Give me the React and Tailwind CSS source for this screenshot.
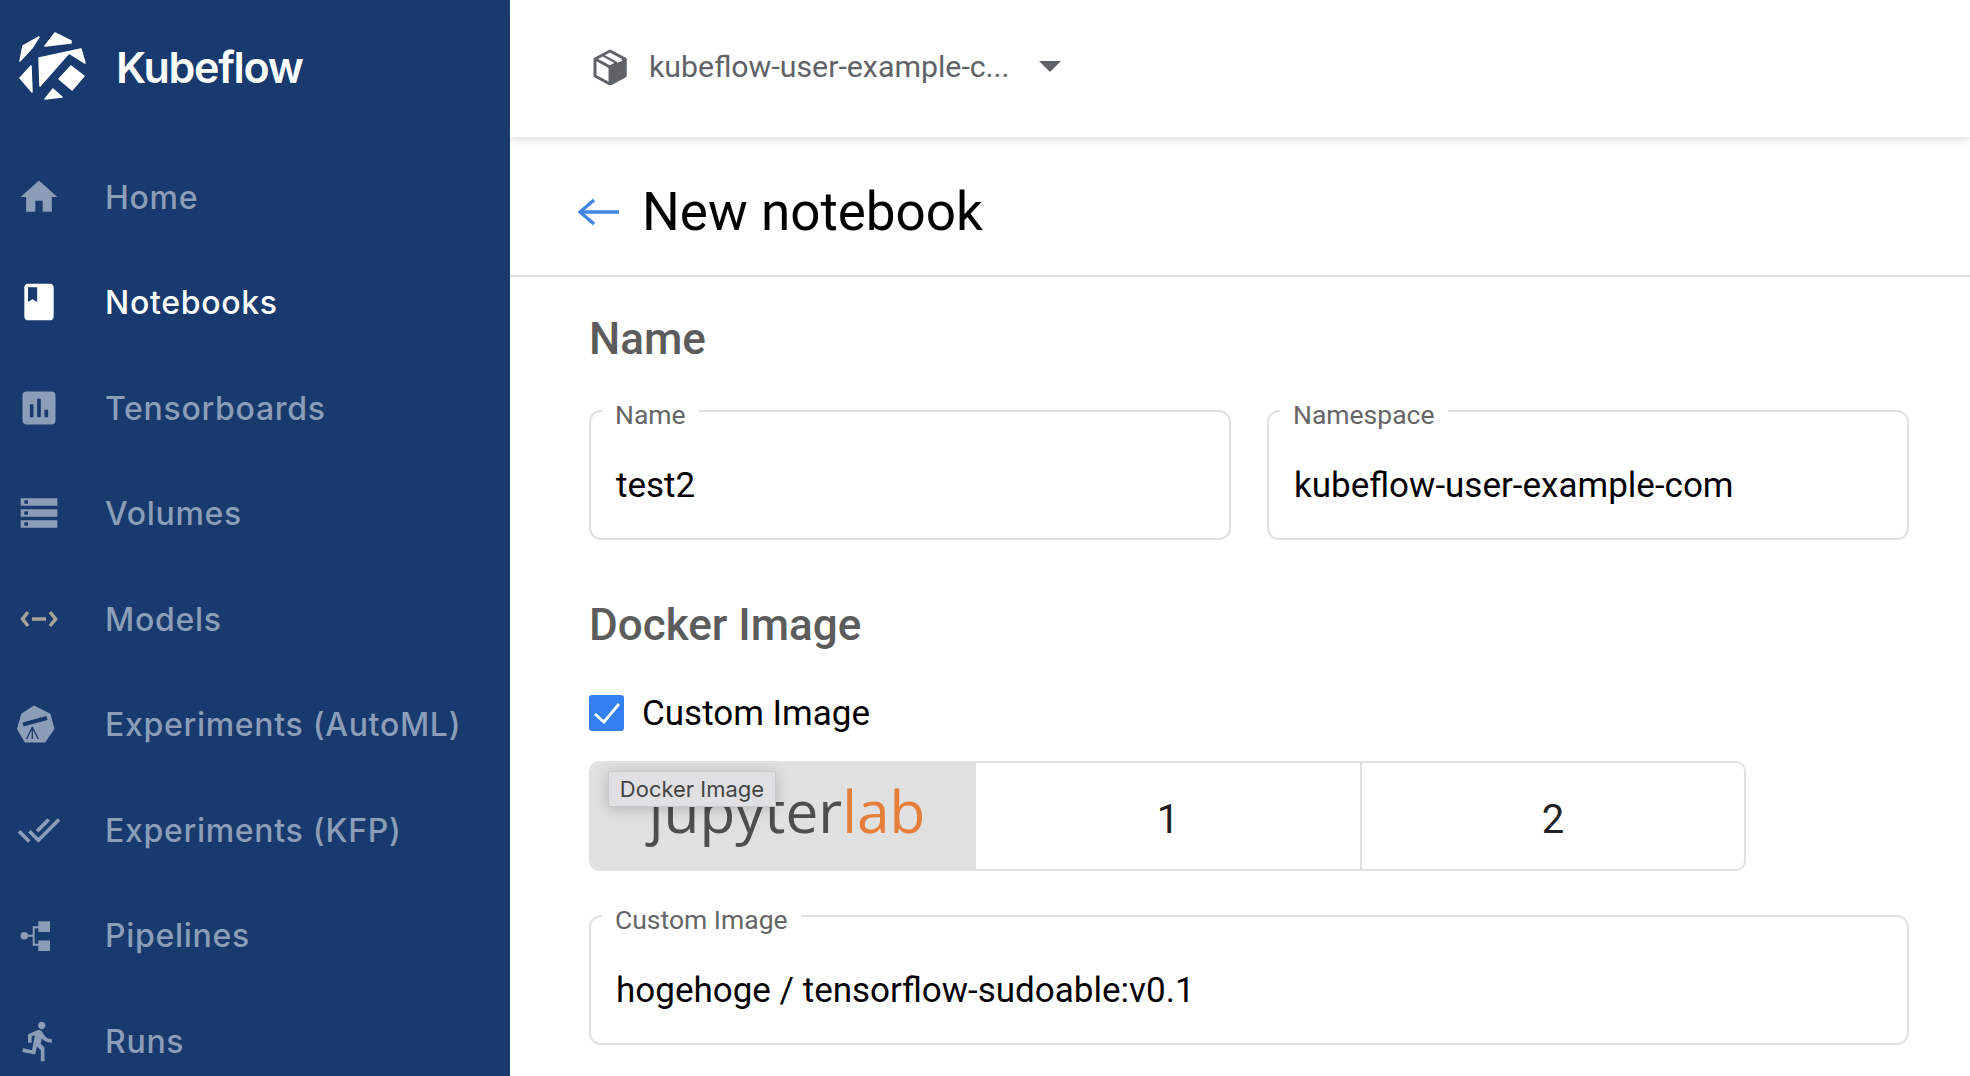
import React from 'react';

const HomeIcon = () => (
  <svg viewBox="0 0 24 24" width="44" height="44" fill="currentColor">
    <path d="M10 20v-6h4v6h5v-8h3L12 3 2 12h3v8z" />
  </svg>
);

const BookIcon = () => (
  <svg viewBox="0 0 24 24" width="44" height="44" fill="currentColor">
    <path d="M18 2H6c-1.1 0-2 .9-2 2v16c0 1.1.9 2 2 2h12c1.1 0 2-.9 2-2V4c0-1.1-.9-2-2-2zM6 4h5v8l-2.5-1.5L6 12V4z" />
  </svg>
);

const ChartIcon = () => (
  <svg viewBox="0 0 24 24" width="44" height="44" fill="currentColor">
    <path d="M19 3H5c-1.1 0-2 .9-2 2v14c0 1.1.9 2 2 2h14c1.1 0 2-.9 2-2V5c0-1.1-.9-2-2-2zM9 17H7v-7h2v7zm4 0h-2V7h2v10zm4 0h-2v-4h2v4z" />
  </svg>
);

const StorageIcon = () => (
  <svg viewBox="0 0 24 24" width="44" height="44" fill="currentColor">
    <path d="M2 20h20v-4H2v4zm2-3h2v2H4v-2zM2 4v4h20V4H2zm4 3H4V5h2v2zm-4 7h20v-4H2v4zm2-3h2v2H4v-2z" />
  </svg>
);

const ModelsIcon = () => (
  <svg viewBox="0 0 44 44" width="44" height="44" fill="none" stroke="#a8a596" strokeWidth="3.5">
    <polyline points="11,15 5.5,22 11,29" />
    <line x1="15" y1="22" x2="29" y2="22" />
    <polyline points="33,15 38.5,22 33,29" />
  </svg>
);

const TelescopeIcon = () => (
  <svg viewBox="0 0 44 44" width="44" height="44" fill="none">
    <polygon points="17,4 33,12 37,27 28,40 8,40 0.5,27 4.7,12" fill="currentColor" stroke="currentColor" strokeWidth="1" strokeLinejoin="round" />
    <line x1="6" y1="22.5" x2="30" y2="16" stroke="#183a6e" strokeWidth="4" />
    <path d="M15.3 25 L9.7 37 M15.3 25 L15.3 37 M15.3 25 L21.3 37" stroke="#183a6e" strokeWidth="1.3" />
  </svg>
);

const DoneAllIcon = () => (
  <svg viewBox="0 0 24 24" width="44" height="44" fill="currentColor">
    <path d="M18 7l-1.41-1.41-6.34 6.34 1.41 1.41L18 7zm4.24-1.41L11.66 16.17 7.48 12l-1.41 1.41L11.66 19l12-12-1.42-1.41zM.41 13.41L6 19l1.41-1.41L1.83 12 .41 13.41z" />
  </svg>
);

const PipelinesIcon = () => (
  <svg viewBox="0 0 44 44" width="44" height="44" fill="currentColor">
    <circle cx="7.3" cy="22.7" r="3.8" />
    <rect x="21.3" y="8.3" width="11.7" height="10.7" />
    <rect x="21.3" y="27.5" width="11.7" height="10.5" />
    <path d="M9 21.7h6.7v-8.4h6v2h-4v15.4h4v2h-6v-9H9z" />
  </svg>
);

const RunIcon = () => (
  <svg viewBox="0 0 24 24" width="44" height="44" fill="currentColor">
    <path d="M13.49 5.48c1.1 0 2-.9 2-2s-.9-2-2-2-2 .9-2 2 .9 2 2 2zm-3.6 13.9l1-4.4 2.1 2v6h2v-7.5l-2.1-2 .6-3c1.3 1.5 3.3 2.5 5.5 2.5v-2c-1.9 0-3.5-1-4.3-2.4l-1-1.6c-.4-.6-1-1-1.7-1-.3 0-.5.1-.8.1l-5.2 2.2v4.7h2v-3.4l1.8-.7-1.6 8.1-4.9-1-.4 2 7 1.4z" />
  </svg>
);

const KubeflowLogo = () => (
  <svg viewBox="15 28 75 77" width="75" height="77" fill="#fff" stroke="#fff" strokeWidth="1.5" strokeLinejoin="round">
    <polygon points="20,61 23,46 39,37 32,48" />
    <polygon points="45,46 55,33 71,41 71,43" />
    <polygon points="39,58 81,49 85,63 69,53 40,86" />
    <polygon points="59,79 71,66 84,76 72,90" />
    <polygon points="20,78 31,66 32,92" />
    <polygon points="45,99 53,89 62,97" />
  </svg>
);

const NamespaceIcon = () => (
  <svg viewBox="0 0 36 36" width="36" height="36" fill="none" stroke="#5f6368" strokeWidth="3" strokeLinejoin="round">
    <polygon points="18,2 33,10 33,27 18,35 3,27 3,10" />
    <polyline points="3,10 18,18 33,10" />
    <polygon points="18,18 33,10 33,27 18,35" fill="#5f6368" />
    <line x1="11" y1="6.5" x2="25" y2="14" strokeWidth="2" />
    <line x1="25" y1="13" x2="30" y2="11" stroke="#fff" strokeWidth="1.5" />
  </svg>
);

const navItems = [
  { label: 'Home', icon: HomeIcon },
  { label: 'Notebooks', icon: BookIcon, active: true },
  { label: 'Tensorboards', icon: ChartIcon },
  { label: 'Volumes', icon: StorageIcon },
  { label: 'Models', icon: ModelsIcon },
  { label: 'Experiments (AutoML)', icon: TelescopeIcon },
  { label: 'Experiments (KFP)', icon: DoneAllIcon },
  { label: 'Pipelines', icon: PipelinesIcon },
  { label: 'Runs', icon: RunIcon },
];

function Sidebar() {
  return (
    <aside className="w-[510px] shrink-0 h-full bg-[#183a6e] font-['Inter',sans-serif] overflow-hidden">
      <div className="h-[144px] flex items-start">
        <div className="ml-[15px] mt-[28px]">
          <KubeflowLogo />
        </div>
        <span className="ml-[26px] mt-[41px] text-[43px] leading-[52px] font-semibold text-white tracking-[-1.3px]">Kubeflow</span>
      </div>
      <nav>
        {navItems.map(({ label, icon: Icon, active }) => (
          <a
            key={label}
            className={`h-[105.5px] flex items-center pl-[17px] text-[32px] font-medium tracking-[0.7px] ${active ? 'text-white' : 'text-[#8c9db8]'}`}
          >
            <span className="w-[44px] h-[44px] shrink-0">
              <Icon />
            </span>
            <span className="ml-[44px] pt-[2px] whitespace-nowrap">{label}</span>
          </a>
        ))}
      </nav>
    </aside>
  );
}

function Field({ label, value }) {
  return (
    <fieldset className="h-[148px] border-2 border-[#e0e0e0] rounded-[12px] min-w-0">
      <legend className="ml-[11px] px-[13px] pt-[8px] text-[26.5px] leading-[30px] text-[#666666]">{label}</legend>
      <div className="mt-[36px] pl-[25px] text-[35px] leading-[40px] text-black whitespace-nowrap">{value}</div>
    </fieldset>
  );
}

function ImageChoices() {
  return (
    <div className="relative mt-[30px] w-[1157px] h-[110px] grid grid-cols-[385px_384px_1fr] border-2 border-[#e0e0e0] rounded-[10px] overflow-hidden">
      <div className="bg-[#e0e0e0] flex items-center justify-center pb-[12px] pl-[7px] font-['Open_Sans',sans-serif] font-normal text-[58.5px] leading-[70px] text-[#4e4e4e]">
        <span>jupyter<span className="text-[#e67e3a]">lab</span></span>
      </div>
      <div className="flex items-center justify-center pt-[7px] text-[40px] text-[#212121]">1</div>
      <div className="border-l-2 border-[#e0e0e0] flex items-center justify-center pt-[7px] text-[40px] text-[#212121]">2</div>
      <div className="absolute left-[17px] top-[8px] w-[168px] h-[36px] flex items-center justify-center bg-[#e0e0e3] border border-[#c9c9c9] shadow-[0_2px_14px_rgba(0,0,0,0.2)] font-['Inter',sans-serif] text-[22px] text-[#444444]">
        Docker Image
      </div>
    </div>
  );
}

export default function App() {
  return (
    <div className="w-[1970px] h-[1076px] flex overflow-hidden bg-white font-['Roboto',sans-serif]">
      <Sidebar />
      <main className="flex-1 min-w-0">
        <header className="relative h-[137px] flex items-center pl-[82px] pb-[4px] shadow-[0_2px_8px_rgba(60,64,67,0.2)]">
          <NamespaceIcon />
          <span className="ml-[21px] text-[30.3px] text-[#5f6368] whitespace-nowrap">kubeflow-user-example-c...</span>
          <svg className="ml-[29px]" width="22" height="11" viewBox="0 0 22 11" fill="#5f6368">
            <polygon points="0,0 22,0 11,11" />
          </svg>
        </header>
        <div className="h-[140px] flex items-center border-b-2 border-[#e0e0e0] pl-[68px] pt-[12px]">
          <svg width="42" height="28" viewBox="0 0 42 28" fill="none" stroke="#4285e4" strokeWidth="3.5">
            <line x1="2" y1="14" x2="41" y2="14" />
            <polyline points="16,2 2,14 16,26" />
          </svg>
          <h1 className="ml-[22px] text-[53px] leading-[60px] text-black">New notebook</h1>
        </div>
        <div className="pl-[79px] pr-[61px]">
          <h2 className="mt-[40px] text-[44px] leading-[44px] font-medium text-[#5c5c5c]">Name</h2>
          <div className="mt-[31px] grid grid-cols-2 gap-[36px]">
            <Field label="Name" value="test2" />
            <Field label="Namespace" value="kubeflow-user-example-com" />
          </div>
          <h2 className="mt-[63px] text-[44px] leading-[44px] font-medium text-[#5c5c5c]">Docker Image</h2>
          <label className="mt-[48px] h-[36px] flex items-center">
            <span className="w-[35px] h-[36px] rounded-[3px] bg-[#3380f4] flex items-center justify-center">
              <svg width="35" height="36" viewBox="0 0 35 36" fill="none" stroke="#fff" strokeWidth="2.8">
                <polyline points="6,19 15,27 30,9" />
              </svg>
            </span>
            <span className="ml-[18px] pt-[2px] text-[35px] text-black">Custom Image</span>
          </label>
          <ImageChoices />
          <div className="mt-[26px]">
            <Field label="Custom Image" value="hogehoge / tensorflow-sudoable:v0.1" />
          </div>
        </div>
      </main>
    </div>
  );
}
